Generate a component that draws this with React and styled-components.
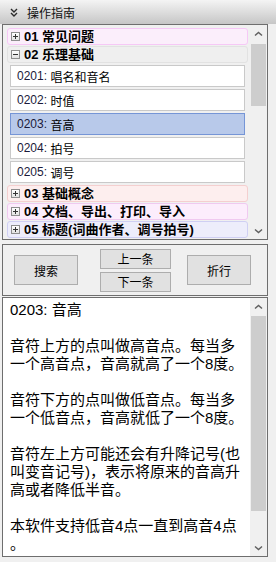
import React from "react";
import styled, { createGlobalStyle } from "styled-components";

const Global = createGlobalStyle`
  html, body { margin: 0; padding: 0; background: #f0f0f0; }
  body { font-family: "Liberation Sans", "Noto Sans CJK SC", sans-serif; }
  * { box-sizing: border-box; }
`;

const Root = styled.div`
  width: 276px;
  height: 562px;
  background: #f0f0f0;
  display: flex;
  flex-direction: column;
  overflow: hidden;
  font-family: "Liberation Sans", "Noto Sans CJK SC", sans-serif;
  color: #000;
`;

const TitleBar = styled.div`
  height: 24px;
  flex-shrink: 0;
  display: flex;
  align-items: center;
  gap: 9px;
  padding-left: 10px;
  background: linear-gradient(#f4f4f4, #c6c6c6);
  font-size: 12px;
  color: #111;
`;

const Main = styled.div`
  width: 268px;
  padding-left: 2px;
  display: flex;
  flex-direction: column;
`;

const TreePanel = styled.div`
  height: 216px;
  border: 1px solid #6e6e6e;
  display: flex;
  background: #f0f0f0;
`;

const TreeList = styled.div`
  flex: 1;
  padding: 3px 2px 0 4px;
  display: flex;
  flex-direction: column;
  gap: 1px;
  overflow: hidden;
`;

const GroupHeader = styled.div`
  height: 17px;
  flex-shrink: 0;
  border: 1px solid ${(p) => p.$border};
  background: ${(p) => p.$bg};
  border-radius: 3px;
  display: flex;
  align-items: center;
  gap: 4px;
  padding-left: 3px;
  font-size: 13px;
  font-weight: bold;
  line-height: 15px;
  white-space: nowrap;
`;

const ToggleBox = styled.span`
  width: 9px;
  height: 9px;
  flex-shrink: 0;
  border: 1px solid #8e8e8e;
  background: linear-gradient(#ffffff, #e2e2e2);
  position: relative;
  &::before {
    content: "";
    position: absolute;
    left: 1px;
    top: 3px;
    width: 5px;
    height: 1px;
    background: #333;
  }
  &::after {
    content: "";
    position: absolute;
    left: 3px;
    top: 1px;
    width: 1px;
    height: 5px;
    background: #333;
    display: ${(p) => (p.$open ? "none" : "block")};
  }
`;

const ItemGroup = styled.div`
  display: flex;
  flex-direction: column;
  gap: 2px;
  padding: 1px 3px;
`;

const Item = styled.div`
  height: 22px;
  flex-shrink: 0;
  border: 1px solid ${(p) => (p.$selected ? "#7595d6" : "#c9c9c9")};
  background: ${(p) => (p.$selected ? "#b8c9ea" : "#ffffff")};
  display: flex;
  align-items: center;
  padding-left: 6px;
  font-size: 12px;
  white-space: nowrap;
`;

const Num = styled.span`
  color: #1a1a3a;
`;

const ScrollBar = styled.div`
  width: 17px;
  flex-shrink: 0;
  display: flex;
  flex-direction: column;
  background: #f0f0f0;
`;

const ArrowButton = styled.div`
  height: 17px;
  flex-shrink: 0;
  display: flex;
  align-items: center;
  justify-content: center;
`;

const Track = styled.div`
  flex: 1;
`;

const Thumb = styled.div`
  margin: ${(p) => p.$top}px 1px 0;
  height: ${(p) => p.$h}px;
  background: #cdcdcd;
`;

const ButtonPanel = styled.div`
  margin-top: 4px;
  height: 52px;
  border: 1px solid #6e6e6e;
  display: flex;
  align-items: center;
  padding-left: 11px;
`;

const Button = styled.button`
  width: ${(p) => p.$w}px;
  height: ${(p) => p.$h}px;
  padding: 0;
  background: #e1e1e1;
  border: 1px solid #adadad;
  font-family: "Liberation Sans", "Noto Sans CJK SC", sans-serif;
  font-size: 12px;
  color: #000;
  display: flex;
  align-items: center;
  justify-content: center;
`;

const NavColumn = styled.div`
  display: flex;
  flex-direction: column;
  gap: 3px;
  margin: 0 16px 0 22px;
`;

const ContentPanel = styled.div`
  margin-top: 1px;
  height: 260px;
  border: 1px solid #6e6e6e;
  display: flex;
`;

const TextArea = styled.div`
  flex: 1;
  background: #ffffff;
  padding: 3px 0 0 7px;
  font-size: 15px;
  line-height: 18px;
  overflow: hidden;
`;

const Line = styled.div`
  height: 18px;
  white-space: pre;
`;

const Chevron = ({ down }) => (
  <svg width="9" height="6" viewBox="0 0 9 6">
    <path
      d={down ? "M1 1.5 L4.5 4.5 L8 1.5" : "M1 4.5 L4.5 1.5 L8 4.5"}
      fill="none"
      stroke="#606060"
      strokeWidth="1.5"
    />
  </svg>
);

const DoubleDown = () => (
  <svg width="8" height="9" viewBox="0 0 8 9">
    <path d="M1 1 L4 4 L7 1 M1 5 L4 8 L7 5" fill="none" stroke="#2a2a2a" strokeWidth="1.4" />
  </svg>
);

const Scroll = ({ top, h }) => (
  <ScrollBar>
    <ArrowButton>
      <Chevron />
    </ArrowButton>
    <Track>
      <Thumb $top={top} $h={h} />
    </Track>
    <ArrowButton>
      <Chevron down />
    </ArrowButton>
  </ScrollBar>
);

const groups = {
  g01: { bg: "#fbeefb", border: "#f6c8f6" },
  g02: { bg: "#efefef", border: "#e2e2e2" },
  g03: { bg: "#fdeeee", border: "#f4cfcf" },
  g04: { bg: "#fcedfc", border: "#f0c9f0" },
  g05: { bg: "#ededfb", border: "#cfcff3" },
};

const items = [
  ["0201:", "唱名和音名"],
  ["0202:", "时值"],
  ["0203:", "音高"],
  ["0204:", "拍号"],
  ["0205:", "调号"],
];

const lines = [
  "0203: 音高",
  "",
  "音符上方的点叫做高音点。每当多",
  "一个高音点，音高就高了一个8度。",
  "",
  "音符下方的点叫做低音点。每当多",
  "一个低音点，音高就低了一个8度。",
  "",
  "音符左上方可能还会有升降记号(也",
  "叫变音记号)，表示将原来的音高升",
  "高或者降低半音。",
  "",
  "本软件支持低音4点一直到高音4点",
  "。",
];

const Header = ({ g, open, children }) => (
  <GroupHeader $bg={groups[g].bg} $border={groups[g].border}>
    <ToggleBox $open={open} />
    <span>{children}</span>
  </GroupHeader>
);

export default function App() {
  return (
    <Root>
      <Global />
      <TitleBar>
        <DoubleDown />
        <span>操作指南</span>
      </TitleBar>
      <Main>
        <TreePanel>
          <TreeList>
            <Header g="g01">01 常见问题</Header>
            <Header g="g02" open>02 乐理基础</Header>
            <ItemGroup>
              {items.map(([n, t]) => (
                <Item key={n} $selected={n === "0203:"}>
                  <Num>{n}</Num>&nbsp;{t}
                </Item>
              ))}
            </ItemGroup>
            <Header g="g03">03 基础概念</Header>
            <Header g="g04">04 文档、导出、打印、导入</Header>
            <Header g="g05">05 标题(词曲作者、调号拍号)</Header>
          </TreeList>
          <Scroll top={2} h={62} />
        </TreePanel>
        <ButtonPanel>
          <Button $w={64} $h={30}>搜索</Button>
          <NavColumn>
            <Button $w={71} $h={20}>上一条</Button>
            <Button $w={71} $h={20}>下一条</Button>
          </NavColumn>
          <Button $w={64} $h={30}>折行</Button>
        </ButtonPanel>
        <ContentPanel>
          <TextArea>
            {lines.map((l, i) => (
              <Line key={i}>{l}</Line>
            ))}
          </TextArea>
          <Scroll top={1} h={195} />
        </ContentPanel>
      </Main>
    </Root>
  );
}
